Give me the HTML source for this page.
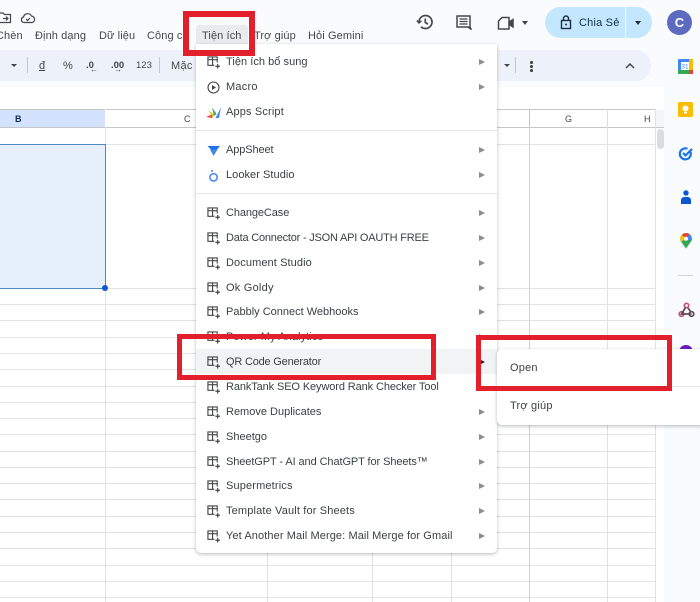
<!DOCTYPE html>
<html><head><meta charset="utf-8">
<style>
*{box-sizing:border-box}
html,body{margin:0;padding:0}
body{width:700px;height:602px;overflow:hidden;position:relative;background:#f9fbfd;font-family:"Liberation Sans",sans-serif;color:#3c4043}
.a{position:absolute}
.t{position:absolute;white-space:nowrap;line-height:14px}
.mb{font-size:11px;top:29px;color:#444746;letter-spacing:.1px}
.h{height:1px;left:0;width:656px;background:#e1e3e1}
.v{width:1px;top:127px;height:475px;background:#e1e3e1}
.vh{width:1px;top:109px;height:18px;background:#c4c7c5}
.ch{font-size:9px;top:113px;color:#444746;line-height:12px}
.tb{font-size:10px;top:60px;color:#444746;line-height:12px}
#menu{left:196px;top:44px;width:301px;height:509px;background:#fff;border-radius:0 0 5px 5px;box-shadow:0 1px 3px rgba(60,64,67,.25),0 2px 5px rgba(60,64,67,.1)}
.m{position:absolute;left:226px;font-size:11px;color:#3c4043;line-height:14px;white-space:nowrap;letter-spacing:.1px;margin-top:1px}
.ar{position:absolute;left:479px;width:0;height:0;border-left:6px solid #8a8d90;border-top:3px solid transparent;border-bottom:3px solid transparent;margin-top:1px}
.ic{position:absolute;left:207px;width:13px;height:13px;margin-top:1px}
.r{position:absolute;border:5px solid #e21f2a}
</style></head><body>
<!-- top icons -->
<svg class="a" style="left:-4px;top:11px" width="46" height="14" viewBox="0 0 46 14" fill="none" stroke="#444746" stroke-width="1.2"><path d="M3 2h4l1.500 1.500h6v8h-11.500z"/><path d="M7 7.500h5M10 5.500l2 2-2 2"/><path d="M28 11.500a2.800 2.800 0 0 1-.5-5.500 4.300 4.300 0 0 1 8-1 3.300 3.300 0 0 1 .5 6.500z"/><path d="M30 8l1.500 1.500 2.500-2.500"/></svg>
<div class="t mb" style="left:-4px">Chèn</div>
<div class="t mb" style="left:35px">Định dạng</div>
<div class="t mb" style="left:99px">Dữ liệu</div>
<div class="t mb" style="left:147px">Công cụ</div>
<div class="a" style="left:196px;top:25px;width:52px;height:19px;background:#e9ebee;border-radius:3px 3px 0 0"></div>
<div class="t mb" style="left:202px">Tiện ích</div>
<div class="t mb" style="left:254px">Trợ giúp</div>
<div class="t mb" style="left:308px">Hỏi Gemini</div>
<!-- right header icons -->
<svg class="a" style="left:416px;top:13px" width="18" height="18" viewBox="0 0 18 18" fill="none" stroke="#444746" stroke-width="1.700"><path d="M3 9a6.500 6.500 0 1 1 2 4.700"/><path d="M.8 7.500L3 10l2.500-2.200" stroke-width="1.400"/><path d="M9.300 5.500v4l2.700 1.600"/></svg>
<svg class="a" style="left:455px;top:14px" width="18" height="18" viewBox="0 0 18 18" fill="none" stroke="#444746" stroke-width="1.500"><path d="M2 2h13v11h-0.500l2 2.500-3.500-2.500H2z"/><path d="M4.500 5h8M4.500 7.500h8M4.500 10h8" stroke-width="1.200"/></svg>
<svg class="a" style="left:497px;top:15px" width="18" height="16" viewBox="0 0 18 16" fill="none" stroke="#444746" stroke-width="1.500"><path d="M1.500 14V6l3.500-3.500h7V14z"/><path d="M13 6.500l3-2v7.500l-3-2z" fill="#444746"/></svg>
<div class="a" style="left:522px;top:21px;width:0;height:0;border-left:3.500px solid transparent;border-right:3.500px solid transparent;border-top:4px solid #444746"></div>
<div class="a" style="left:545px;top:7px;width:107px;height:31px;border-radius:16px;background:#c2e7ff"></div>
<div class="a" style="left:625px;top:7px;width:1px;height:31px;background:#f0f8ff"></div>
<svg class="a" style="left:559px;top:15px" width="14" height="15" viewBox="0 0 14 15" fill="none" stroke="#1f2d3a" stroke-width="1.400"><rect x="2.500" y="5.500" width="9" height="8"/><path d="M4.500 5.500V3.500a2.500 2.500 0 0 1 5 0v2"/><circle cx="7" cy="9.500" r="1" fill="#1f2d3a" stroke="none"/></svg>
<div class="t" style="left:579px;top:16px;font-size:11px;color:#13303f;letter-spacing:.2px">Chia Sẻ</div>
<div class="a" style="left:635px;top:21px;width:0;height:0;border-left:3.500px solid transparent;border-right:3.500px solid transparent;border-top:4px solid #1f2d3a"></div>
<div class="a" style="left:667px;top:10px;width:25px;height:25px;border-radius:50%;background:#5c6bc0;color:#fff;font-size:13px;font-weight:bold;text-align:center;line-height:25px">C</div>
<!-- toolbar -->
<div class="a" style="left:-20px;top:50px;width:671px;height:31px;border-radius:16px;background:#edf2fa"></div>
<div class="a" style="left:11px;top:64px;width:0;height:0;border-left:3px solid transparent;border-right:3px solid transparent;border-top:3.500px solid #444746"></div>
<div class="a" style="left:27px;top:57px;width:1px;height:16px;background:#c7c7c7"></div>
<div class="t tb" style="left:39px;text-decoration:underline;font-size:11px">đ</div>
<div class="t tb" style="left:63px;font-size:11px">%</div>
<div class="t tb" style="left:86px;font-weight:bold;font-size:9.500px">.0</div>
<div class="t" style="left:90px;top:65px;font-size:8px;line-height:9px;color:#444746">←</div>
<div class="t tb" style="left:111px;font-weight:bold;font-size:9.500px">.00</div>
<div class="t" style="left:114px;top:65px;font-size:8px;line-height:9px;color:#444746">→</div>
<div class="t tb" style="left:136px;font-size:9.500px">123</div>
<div class="a" style="left:159px;top:57px;width:1px;height:16px;background:#c7c7c7"></div>
<div class="t tb" style="left:171px;font-size:11px;letter-spacing:.3px">Mặc</div>
<div class="a" style="left:504px;top:64px;width:0;height:0;border-left:3px solid transparent;border-right:3px solid transparent;border-top:3.500px solid #444746"></div>
<div class="a" style="left:515px;top:57px;width:1px;height:16px;background:#c7c7c7"></div>
<div class="a" style="left:530px;top:61px;width:2.500px;height:2.500px;background:#444746;border-radius:50%;box-shadow:0 4px 0 #444746,0 8px 0 #444746"></div>
<svg class="a" style="left:624px;top:62px" width="12" height="8" viewBox="0 0 12 8" fill="none" stroke="#444746" stroke-width="1.500"><path d="M2 6l4-4 4 4"/></svg>
<!-- sheet -->
<div class="a" style="left:0;top:87px;width:664px;height:515px;background:#fff"></div>
<div class="a" style="left:0;top:109px;width:106px;height:18px;background:#d3e3fd"></div>
<div class="a" style="left:0;top:109px;width:656px;height:1px;background:#c4c7c5"></div>
<div class="a" style="left:0;top:127px;width:664px;height:1px;background:#c4c7c5"></div>
<div class="a" style="left:656px;top:110px;width:8px;height:17px;background:#f4f5f6"></div>
<div class="a" style="left:0;top:144px;width:656px;height:1px;background:#e1e3e1"></div>
<div class="a h" style="top:288px"></div><div class="a h" style="top:304px"></div><div class="a h" style="top:320px"></div><div class="a h" style="top:337px"></div><div class="a h" style="top:353px"></div><div class="a h" style="top:369px"></div><div class="a h" style="top:386px"></div><div class="a h" style="top:402px"></div><div class="a h" style="top:418px"></div><div class="a h" style="top:434px"></div><div class="a h" style="top:451px"></div><div class="a h" style="top:467px"></div><div class="a h" style="top:483px"></div><div class="a h" style="top:499px"></div><div class="a h" style="top:516px"></div><div class="a h" style="top:532px"></div><div class="a h" style="top:548px"></div><div class="a h" style="top:565px"></div><div class="a h" style="top:581px"></div><div class="a h" style="top:597px"></div>
<div class="a vh" style="left:105px;background:#fff"></div>
<div class="a vh" style="left:529px"></div><div class="a vh" style="left:607px;background:#dcdedc"></div><div class="a vh" style="left:655px;background:#e1e3e1"></div>
<div class="a v" style="left:105px"></div><div class="a v" style="left:267px"></div><div class="a v" style="left:372px"></div><div class="a v" style="left:451px"></div><div class="a v" style="left:529px;background:#d0d2d0"></div><div class="a v" style="left:607px"></div><div class="a v" style="left:655px"></div>
<div class="a" style="left:-2px;top:144px;width:108px;height:145px;background:#e6effc;border:1px solid #4b8ac6"></div>
<div class="a" style="left:102px;top:285px;width:6px;height:6px;border-radius:50%;background:#0b57d0"></div>
<div class="t ch" style="left:15px;font-weight:bold;color:#0b2a55">B</div>
<div class="t ch" style="left:184px">C</div>
<div class="t ch" style="left:565px">G</div>
<div class="t ch" style="left:644px">H</div>
<div class="a" style="left:657px;top:129px;width:7px;height:20px;border-radius:4px;background:#dadce0"></div>
<!-- side panel icons -->
<svg class="a" style="left:678px;top:59px" width="15" height="15" viewBox="0 0 15 15"><rect width="15" height="15" rx="1" fill="#4285f4"/><rect x="11" y="0" width="4" height="11" fill="#fbbc04"/><rect x="0" y="11" width="11" height="4" fill="#34a853"/><rect x="11" y="11" width="4" height="4" fill="#ea4335"/><rect x="3" y="3" width="8" height="8" fill="#fff"/><text x="7" y="9.500" font-size="6.500" text-anchor="middle" fill="#4285f4" font-family="Liberation Sans">31</text></svg>
<svg class="a" style="left:678px;top:102px" width="15" height="15" viewBox="0 0 15 15"><rect width="15" height="15" rx="1.500" fill="#fbbc04"/><circle cx="7.500" cy="6.500" r="3" fill="#fff"/><rect x="6" y="10" width="3" height="1.500" fill="#fff"/></svg>
<svg class="a" style="left:678px;top:146px" width="15" height="15" viewBox="0 0 15 15" fill="none" stroke="#1a73e8" stroke-width="2.200"><path d="M12.500 6a5.500 5.500 0 1 1-3-3.200"/><path d="M5 7l2.500 2.500L14 3"/></svg>
<svg class="a" style="left:680px;top:190px" width="12" height="14" viewBox="0 0 12 14" fill="#0b57d0"><circle cx="6" cy="3" r="2.700"/><path d="M1 14v-4a3.500 3.500 0 0 1 3-3h4a3.500 3.500 0 0 1 3 3V14z"/></svg>
<svg class="a" style="left:680px;top:233px" width="12" height="16" viewBox="0 0 12 16"><path d="M6 0a5.800 5.800 0 0 1 5.800 5.800c0 1.200-.4 2-1 3L6 15.500 1.200 8.800c-.6-1-1-1.800-1-3A5.800 5.800 0 0 1 6 0z" fill="#34a853"/><path d="M1.200 8.800c-.6-1-1-1.800-1-3A5.800 5.800 0 0 1 2 1.700L6 5.800z" fill="#fbbc04"/><path d="M2 1.700A5.800 5.800 0 0 1 9.500 1.200L6 5.800z" fill="#ea4335"/><path d="M9.500 1.200a5.800 5.800 0 0 1 2 7.100L6 5.800z" fill="#4285f4"/><circle cx="6" cy="5.800" r="2" fill="#fff"/></svg>
<div class="a" style="left:678px;top:275px;width:15px;height:1px;background:#d3d6d9"></div>
<svg class="a" style="left:678px;top:302px" width="17" height="16" viewBox="0 0 17 16" fill="none" stroke="#5f4b57" stroke-width="1.700"><circle cx="8.500" cy="3.500" r="2.200" stroke="#c2557a"/><circle cx="3.500" cy="12" r="2.300" stroke="#c2557a"/><circle cx="13.500" cy="12" r="2.300"/><path d="M7.500 5.500L3.500 12h10M10 6l3 4"/></svg>
<div class="a" style="left:679px;top:345px;width:14px;height:14px;border-radius:50%;background:#6a1bc0"></div>
<!-- menu -->
<div id="menu" class="a"></div>
<div class="a" style="left:196px;top:130px;width:301px;height:1px;background:#e3e5e7"></div>
<div class="a" style="left:196px;top:193px;width:301px;height:1px;background:#e3e5e7"></div>
<div class="a" style="left:196px;top:349px;width:301px;height:25px;background:#f1f3f4"></div>
<svg width="0" height="0" style="position:absolute"><defs><g id="x" fill="none" stroke="#444746" stroke-width="1.200"><path d="M8 10H1V1h10v6M1 4h10M6 1v9"/><path d="M11.500 8.500v5M9 11h5" stroke-width="1.300"/></g></defs></svg>
<svg class="ic" style="top:55px" viewBox="0 0 14 14"><use href="#x"/></svg><div class="m" style="top:54px;letter-spacing:.04px">Tiện ích bổ sung</div><div class="ar" style="top:58px"></div>
<svg class="ic" style="top:80px" viewBox="0 0 13 13"><circle cx="6.500" cy="6.500" r="5.500" fill="none" stroke="#444746" stroke-width="1.100"/><path d="M5 4l4 2.500L5 9z" fill="#444746"/></svg><div class="m" style="top:79px;letter-spacing:.23px">Macro</div><div class="ar" style="top:83px"></div>
<svg class="ic" style="top:105px;left:206px;width:15px" viewBox="0 0 15 13"><path d="M0 11l6-2.500.5 3.500z" fill="#ea4335"/><path d="M2 4l5 7 1.500-2z" fill="#fbbc04"/><path d="M6 1.500l2 8.500 2.500-2z" fill="#34a853"/><path d="M15 1.500L9.500 12H13z" fill="#4285f4"/></svg><div class="m" style="top:104px;letter-spacing:.15px">Apps Script</div>
<svg class="ic" style="top:143px" viewBox="0 0 13 13"><path d="M.5 2h12.500l-3 3.500H4z" fill="#1a73e8"/><path d="M3 5.500h7.500L6.500 12z" fill="#4285f4"/></svg><div class="m" style="top:142px;letter-spacing:-.1px">AppSheet</div>
<svg class="ic" style="top:168px" viewBox="0 0 13 13" fill="none"><circle cx="6.500" cy="8.300" r="3.700" stroke="#4285f4" stroke-width="1.500"/><circle cx="5" cy="2" r="1" fill="#4285f4"/></svg><div class="m" style="top:167px;letter-spacing:.05px">Looker Studio</div><div class="ar" style="top:146px"></div><div class="ar" style="top:171px"></div>
<svg class="ic" style="top:206px" viewBox="0 0 14 14"><use href="#x"/></svg><div class="m" style="top:205px;letter-spacing:-.1px">ChangeCase</div><div class="ar" style="top:209px"></div>
<svg class="ic" style="top:231px" viewBox="0 0 14 14"><use href="#x"/></svg><div class="m" style="top:230px;letter-spacing:-.21px">Data Connector - JSON API OAUTH FREE</div><div class="ar" style="top:234px"></div>
<svg class="ic" style="top:256px" viewBox="0 0 14 14"><use href="#x"/></svg><div class="m" style="top:255px">Document Studio</div><div class="ar" style="top:259px"></div>
<svg class="ic" style="top:281px" viewBox="0 0 14 14"><use href="#x"/></svg><div class="m" style="top:280px;letter-spacing:.23px">Ok Goldy</div><div class="ar" style="top:284px"></div>
<svg class="ic" style="top:305px" viewBox="0 0 14 14"><use href="#x"/></svg><div class="m" style="top:304px;letter-spacing:0">Pabbly Connect Webhooks</div><div class="ar" style="top:308px"></div>
<svg class="ic" style="top:330px" viewBox="0 0 14 14"><use href="#x"/></svg><div class="m" style="top:329px">Power My Analytics</div><div class="ar" style="top:333px"></div>
<svg class="ic" style="top:355px" viewBox="0 0 14 14"><use href="#x"/></svg><div class="m" style="top:354px;letter-spacing:-.2px">QR Code Generator</div><div class="ar" style="top:358px;border-left-color:#202124"></div>
<svg class="ic" style="top:380px" viewBox="0 0 14 14"><use href="#x"/></svg><div class="m" style="top:379px;letter-spacing:-.11px">RankTank SEO Keyword Rank Checker Tool</div>
<svg class="ic" style="top:405px" viewBox="0 0 14 14"><use href="#x"/></svg><div class="m" style="top:404px;letter-spacing:0">Remove Duplicates</div><div class="ar" style="top:408px"></div>
<svg class="ic" style="top:430px" viewBox="0 0 14 14"><use href="#x"/></svg><div class="m" style="top:429px;letter-spacing:0">Sheetgo</div><div class="ar" style="top:433px"></div>
<svg class="ic" style="top:455px" viewBox="0 0 14 14"><use href="#x"/></svg><div class="m" style="top:454px;letter-spacing:-.09px">SheetGPT - AI and ChatGPT for Sheets™</div><div class="ar" style="top:458px"></div>
<svg class="ic" style="top:479px" viewBox="0 0 14 14"><use href="#x"/></svg><div class="m" style="top:478px;letter-spacing:.15px">Supermetrics</div><div class="ar" style="top:482px"></div>
<svg class="ic" style="top:504px" viewBox="0 0 14 14"><use href="#x"/></svg><div class="m" style="top:503px;letter-spacing:.15px">Template Vault for Sheets</div><div class="ar" style="top:507px"></div>
<svg class="ic" style="top:529px" viewBox="0 0 14 14"><use href="#x"/></svg><div class="m" style="top:528px">Yet Another Mail Merge: Mail Merge for Gmail</div><div class="ar" style="top:532px"></div>
<!-- submenu -->
<div class="a" style="left:497px;top:349px;width:210px;height:76px;background:#fff;border-radius:5px;box-shadow:0 1px 3px rgba(60,64,67,.25),0 2px 5px rgba(60,64,67,.1)"></div>
<div class="a" style="left:497px;top:386px;width:203px;height:1px;background:#e3e5e7"></div>
<div class="m" style="left:510px;top:360px;letter-spacing:.2px">Open</div>
<div class="m" style="left:510px;top:398px;letter-spacing:.2px">Trợ giúp</div>
<!-- red boxes -->
<div class="r" style="left:183px;top:11px;width:72px;height:45px;border-width:6px"></div>
<div class="r" style="left:177px;top:334px;width:259px;height:46px"></div>
<div class="r" style="left:476px;top:335px;width:196px;height:56px"></div>
</body></html>
